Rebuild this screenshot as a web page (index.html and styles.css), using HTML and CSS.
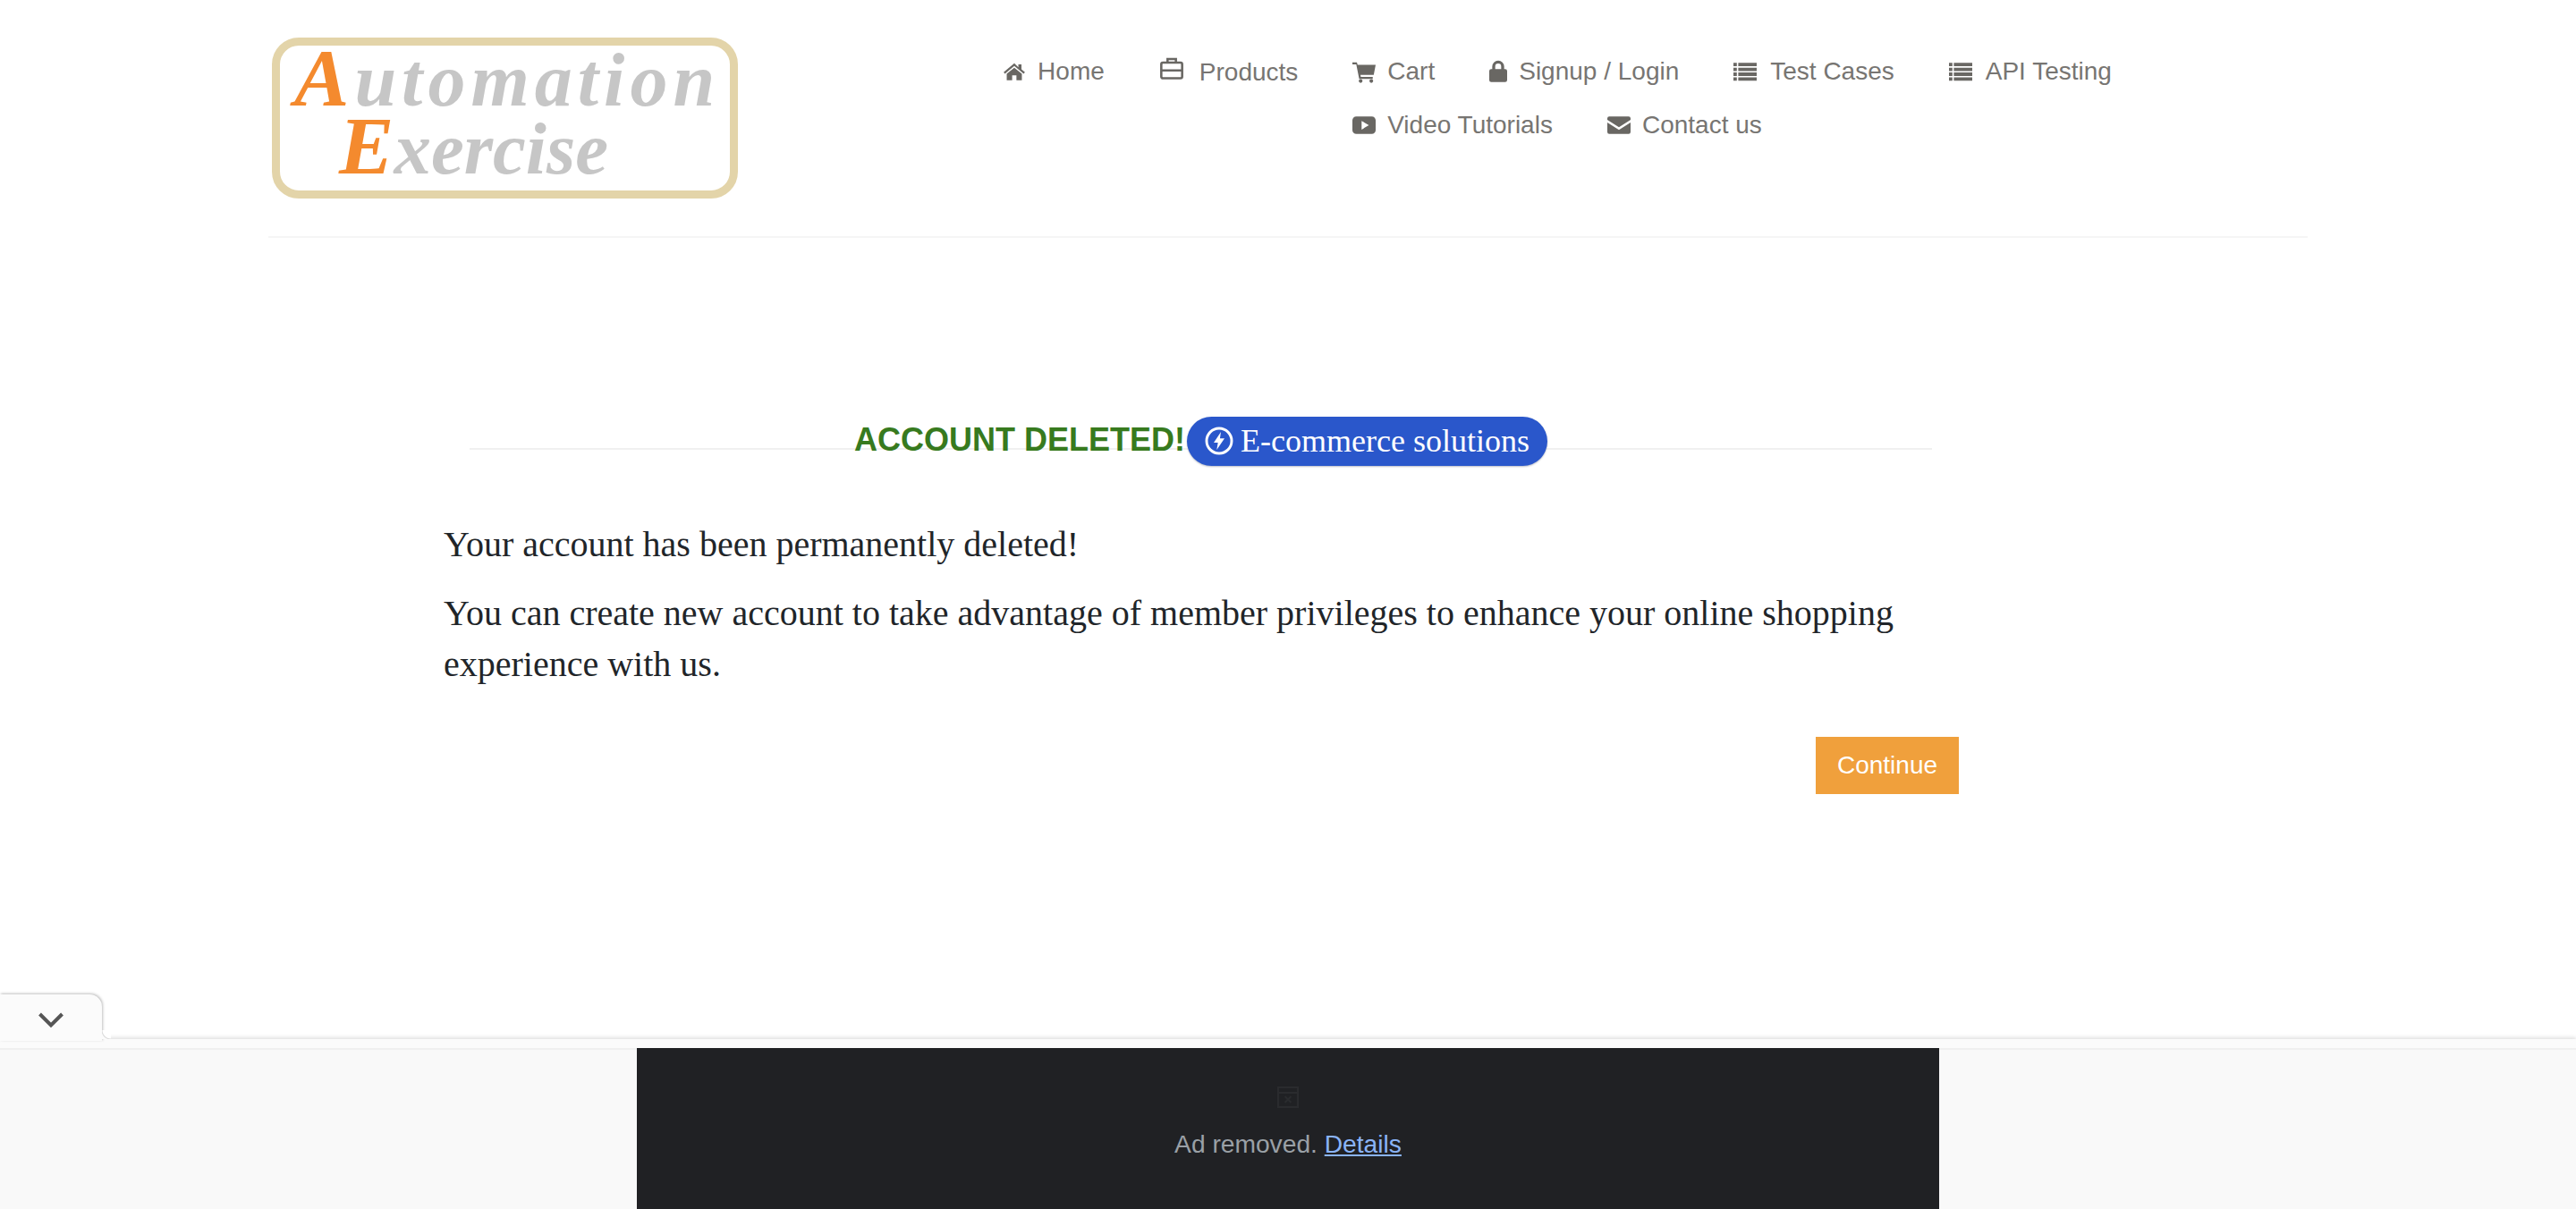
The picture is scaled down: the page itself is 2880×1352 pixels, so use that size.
FILE: index.html
```html
<!DOCTYPE html>
<html>
<head>
<meta http-equiv="Content-Type" content="text/html; charset=utf-8">
<title>Automation Exercise</title>
<link rel="stylesheet" href="styles.css">
</head>

<body>
<div class="container">
	<header class="site-header">
		<a class="logo" href="#">
			<span class="logo-line"><b>A</b>utomation</span>
			<span class="logo-line logo-line-2"><b>E</b>xercise</span>
		</a>
		<ul class="nav">
			<li><a href="#"><svg class="ico" viewBox="0 0 24 24"><path d="M12 3.500 1 12.800l1.300 1.600L12 6.300l9.700 8.100 1.300-1.600-3.600-3V4.500h-3.200v3.100zM12 8 4.200 14.400V21h5.600v-5h4.400v5h5.600v-6.600z"/></svg>Home</a></li>
			<li class="raised"><a href="#"><svg class="ico ico-line" viewBox="0 0 24 24"><path d="M8 6V2.500h8V6M3.500 6h17c.8 0 1.500.7 1.500 1.500v12c0 .8-.7 1.500-1.500 1.500h-17C2.700 21 2 20.300 2 19.500v-12C2 6.700 2.700 6 3.500 6zM2 13.500h20"/></svg><span>Products</span></a></li>
			<li><a href="#"><svg class="ico" viewBox="0 0 24 24"><path d="M0 2.500h4.600l.8 2.500H24l-2 10.500H8.300l.4 2H21v2H7L4 4.700H0z"/><circle cx="8.500" cy="21.800" r="1.900"/><circle cx="19.500" cy="21.800" r="1.900"/></svg>Cart</a></li>
			<li><a href="#"><svg class="ico ico-lock" viewBox="3 1 18 23"><path fill-rule="evenodd" d="M6 10V7.500a6 6 0 0 1 12 0V10h1a2 2 0 0 1 2 2v9a2 2 0 0 1-2 2H5a2 2 0 0 1-2-2v-9a2 2 0 0 1 2-2zm3 0h6V7.500a3 3 0 0 0-6 0z"/></svg>Signup / Login</a></li>
			<li class="wide"><a href="#"><svg class="ico" viewBox="0 0 24 24"><path d="M0 3h3.500v3.500H0zM5 3h19v3.500H5zM0 8h3.500v3.500H0zM5 8h19v3.500H5zM0 13h3.500v3.500H0zM5 13h19v3.500H5zM0 18h3.500v3.500H0zM5 18h19v3.500H5z"/></svg>Test Cases</a></li>
			<li class="wide"><a href="#"><svg class="ico" viewBox="0 0 24 24"><path d="M0 3h3.500v3.500H0zM5 3h19v3.500H5zM0 8h3.500v3.500H0zM5 8h19v3.500H5zM0 13h3.500v3.500H0zM5 13h19v3.500H5zM0 18h3.500v3.500H0zM5 18h19v3.500H5z"/></svg>API Testing</a></li>
			<li class="break"></li>
			<li><a href="#"><svg class="ico" viewBox="0 0 24 24"><path fill-rule="evenodd" d="M4 3h16a4 4 0 0 1 4 4v10a4 4 0 0 1-4 4H4a4 4 0 0 1-4-4V7a4 4 0 0 1 4-4zm5.500 4.500v9l7.500-4.500z"/></svg>Video Tutorials</a></li>
			<li><a href="#"><svg class="ico" viewBox="0 0 24 24"><path d="M2 3h20a2 2 0 0 1 2 2v1.500L12 14 0 6.500V5a2 2 0 0 1 2-2zM0 9.300l12 7.500 12-7.500V19a2 2 0 0 1-2 2H2a2 2 0 0 1-2-2z"/></svg>Contact us</a></li>
		</ul>
	</header>

	<section class="deleted">
		<div class="title-row">
			<h2 class="title">ACCOUNT DELETED!</h2>
			<span class="pill"><svg class="pill-ico" viewBox="0 0 24 24"><circle cx="12" cy="12" r="10.500"/><path class="bolt" d="M13.500 4.500 7.500 13.500h3.500l-1 6 6.500-9.500h-3.800z"/></svg>E-commerce solutions</span>
		</div>
		<p>Your account has been permanently deleted!</p>
		<p>You can create new account to take advantage of member privileges to enhance your online shopping experience with us.</p>
		<div class="actions"><a class="btn" href="#">Continue</a></div>
	</section>
</div>

<div class="ad-dock">
	<div class="dock-tab"><svg class="chevron" viewBox="0 0 30 20"><path d="M2.500 3 15 15.500 27.500 3"/></svg></div>
	<div class="ad-slot">
		<svg class="ad-ico" viewBox="0 0 26 26"><path d="M2 2h22v22H2zM2 8h22M9.500 12l7 7M16.500 12l-7 7"/></svg>
		<div class="ad-text">Ad removed. <a href="#">Details</a></div>
	</div>
</div>
</body>
</html>
```

FILE: styles.css
```css
*{
	box-sizing: border-box;
}
html,body{
	margin: 0;
	padding: 0;
	background: #fff;
}
body{
	font-family: "Liberation Sans", Arial, sans-serif;
	overflow: hidden;
}
a{
	text-decoration: none;
}
.container{
	width: 2280px;
	margin: 0 auto;
}

/* header */
.site-header{
	display: flex;
	height: 266px;
	padding-top: 42px;
	border-bottom: 2px solid #f5f5f5;
}
.logo{
	display: flex;
	flex-direction: column;
	width: 521px;
	height: 180px;
	margin-left: 4px;
	border: 9px solid #e3d4a9;
	border-radius: 30px;
	font-family: "Liberation Serif", serif;
	font-style: italic;
	font-weight: bold;
	color: #c6c6c6;
}
.logo-line{
	font-size: 84px;
	line-height: 68px;
	padding: 2px 0 0 16px;
	letter-spacing: 6px;
	white-space: nowrap;
}
.logo-line-2{
	padding: 5px 0 0 66px;
	font-size: 83px;
	letter-spacing: 0;
}
.logo b{
	font-size: 92px;
	color: #f48a2e;
}
.nav{
	display: flex;
	flex-wrap: wrap;
	justify-content: center;
	align-items: center;
	align-content: flex-start;
	column-gap: 61px;
	width: 1290px;
	margin: 8px 0 0 271px;
	padding: 0;
	list-style: none;
}
.nav .break{
	width: 100%;
	height: 0;
}
.nav a{
	display: flex;
	align-items: center;
	gap: 13px;
	height: 60px;
	font-size: 28px;
	color: #777572;
}
.nav .raised a{
	gap: 17px;
}
.nav .wide a{
	gap: 15px;
}
.ico{
	width: 26px;
	height: 26px;
	fill: #696763;
}
.ico-line{
	width: 28px;
	height: 28px;
	fill: none;
	stroke: #696763;
	stroke-width: 2.200;
	margin-top: -6px;
}
.ico-lock{
	width: 20px;
}
.raised span{
	padding-top: 2px;
}

/* account deleted */
.deleted{
	padding: 199px 390px 0 196px;
	font-family: "Liberation Serif", serif;
	font-size: 40px;
	line-height: 57px;
	color: #212529;
}
.title-row{
	display: flex;
	justify-content: center;
	align-items: center;
	width: 1635px;
	height: 56px;
	margin: 0 0 59px 29px;
	background: linear-gradient(#f0f0f0,#f0f0f0) 0 36px / 100% 2px no-repeat;
}
.title{
	margin: 0;
	padding-bottom: 2px;
	font-family: "Liberation Sans", Arial, sans-serif;
	font-size: 36px;
	line-height: 54px;
	font-weight: bold;
	color: #377a1e;
	white-space: nowrap;
}
.pill{
	display: flex;
	align-items: center;
	gap: 8px;
	height: 55px;
	margin-left: 2px;
	padding: 0 20px;
	border-radius: 28px;
	background: #2a57cb;
	box-shadow: 0 1px 2px #b9bcc6;
	font-size: 36px;
	line-height: 54px;
	color: #fff;
	white-space: nowrap;
}
.pill-ico{
	width: 32px;
	height: 32px;
	fill: none;
	stroke: #fff;
	stroke-width: 2.200;
}
.pill-ico .bolt{
	fill: #fff;
	stroke: none;
}
.deleted p{
	margin: 0 0 20px;
}
.actions{
	display: flex;
	justify-content: flex-end;
	margin-top: 53px;
}
.btn{
	width: 160px;
	height: 64px;
	background: #f0a03c;
	font-family: "Liberation Sans", Arial, sans-serif;
	font-size: 28px;
	line-height: 64px;
	text-align: center;
	color: #fff;
}

/* ad bar, stuck to the bottom of the window */
.ad-dock{
	position: fixed;
	left: 0;
	right: 0;
	bottom: 0;
	display: flex;
	justify-content: center;
	height: 190px;
	padding-top: 10px;
	background: linear-gradient(#fbfbfb 10px,#f0f0f0 10px,#f0f0f0 12px,#f9f9f9 12px);
	box-shadow: 0 -2px 4px rgba(0,0,0,0.12);
}
.dock-tab{
	position: absolute;
	left: 0;
	top: -50px;
	display: flex;
	justify-content: center;
	align-items: center;
	width: 114px;
	height: 52px;
	padding-top: 5px;
	background: #fbfbfb;
	border-top-right-radius: 14px;
	box-shadow: 1px -1px 3px rgba(0,0,0,0.25);
}
.dock-tab::after{
	content: "";
	position: absolute;
	left: 114px;
	bottom: 2px;
	width: 10px;
	height: 10px;
	background: radial-gradient(circle at 100% 0, #fff 9px, #d8d8d8 10px, #fbfbfb 11px);
}
.chevron{
	width: 30px;
	height: 20px;
	fill: none;
	stroke: #555;
	stroke-width: 4;
}
.ad-slot{
	display: flex;
	flex-direction: column;
	align-items: center;
	width: 1456px;
	padding-top: 42px;
	background: #202124;
}
.ad-ico{
	width: 26px;
	height: 26px;
	fill: none;
	stroke: #2a2b2e;
	stroke-width: 2;
}
.ad-text{
	margin-top: 19px;
	font-size: 28.200px;
	line-height: 40px;
	color: #9aa0a6;
}
.ad-text a{
	color: #8ab4f8;
	text-decoration: underline;
}
```
